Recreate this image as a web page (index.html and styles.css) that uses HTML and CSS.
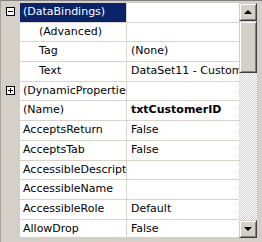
FILE: index.html
```html
<!DOCTYPE html>
<html>
<head>
<meta charset="utf-8">
<link rel="stylesheet" href="styles.css">
</head>
<body>
<div class="frame">
  <div class="grid">
    <div class="row selected">
      <div class="gutter"><span class="box minus"></span></div>
      <div class="name">(DataBindings)</div>
      <div class="value"></div>
    </div>
    <div class="row">
      <div class="gutter"></div>
      <div class="name sub">(Advanced)</div>
      <div class="value"></div>
    </div>
    <div class="row">
      <div class="gutter"></div>
      <div class="name sub">Tag</div>
      <div class="value">(None)</div>
    </div>
    <div class="row">
      <div class="gutter"></div>
      <div class="name sub">Text</div>
      <div class="value">DataSet11 - CustomerID</div>
    </div>
    <div class="row">
      <div class="gutter"><span class="box plus"></span></div>
      <div class="name">(DynamicProperties)</div>
      <div class="value"></div>
    </div>
    <div class="row">
      <div class="gutter"></div>
      <div class="name">(Name)</div>
      <div class="value bold">txtCustomerID</div>
    </div>
    <div class="row">
      <div class="gutter"></div>
      <div class="name">AcceptsReturn</div>
      <div class="value">False</div>
    </div>
    <div class="row">
      <div class="gutter"></div>
      <div class="name">AcceptsTab</div>
      <div class="value">False</div>
    </div>
    <div class="row">
      <div class="gutter"></div>
      <div class="name">AccessibleDescription</div>
      <div class="value"></div>
    </div>
    <div class="row">
      <div class="gutter"></div>
      <div class="name">AccessibleName</div>
      <div class="value"></div>
    </div>
    <div class="row">
      <div class="gutter"></div>
      <div class="name">AccessibleRole</div>
      <div class="value">Default</div>
    </div>
    <div class="row">
      <div class="gutter"></div>
      <div class="name">AllowDrop</div>
      <div class="value">False</div>
    </div>
  </div>
  <div class="scrollbar">
    <div class="btn"><span class="arrow up"></span></div>
    <div class="thumb"></div>
    <div class="track"></div>
    <div class="btn"><span class="arrow down"></span></div>
  </div>
</div>
</body>
</html>
```
FILE: styles.css
```css
html, body {
  margin: 0;
  padding: 0;
  background: #d4d0c8;
}
.frame {
  box-sizing: border-box;
  width: 262px;
  height: 242px;
  background: #d4d0c8;
  border-top: 1px solid #808080;
  border-left: 1px solid #a8a49c;
  padding: 2px 5px 5px 0;
  display: flex;
  font-family: "DejaVu Sans", sans-serif;
  font-size: 11px;
  color: #000;
}
.grid {
  width: 238px;
  height: 234px;
  overflow: hidden;
  display: flex;
  flex-direction: column;
}
.row {
  flex: 0 0 19.7px;
  height: 19.7px;
  display: flex;
}
.gutter {
  width: 19px;
  flex: 0 0 19px;
  background: #d4d0c8;
  position: relative;
}
.name, .value {
  box-sizing: border-box;
  background: #fff;
  border-bottom: 1px solid #d8d4cc;
  white-space: nowrap;
  overflow: hidden;
  line-height: 18.7px;
}
.name {
  width: 107px;
  flex: 0 0 107px;
  border-right: 1px solid #d8d4cc;
  padding-left: 3px;
}
.name.sub {
  padding-left: 19px;
}
.value {
  flex: 1 1 auto;
  padding-left: 4px;
}
.value.bold {
  font-weight: bold;
}
.selected .name {
  background: #0a246a;
  color: #fff;
}
.box {
  position: absolute;
  left: 5px;
  top: 4px;
  width: 9px;
  height: 9px;
  box-sizing: border-box;
  border: 1px solid #000;
  background: #fff;
}
.box::before {
  content: "";
  position: absolute;
  left: 1px;
  top: 3px;
  width: 5px;
  height: 1px;
  background: #000;
}
.plus::after {
  content: "";
  position: absolute;
  left: 3px;
  top: 1px;
  width: 1px;
  height: 5px;
  background: #000;
}
.scrollbar {
  width: 18px;
  height: 235px;
  display: flex;
  flex-direction: column;
}
.btn, .thumb {
  box-sizing: border-box;
  background: #d4d0c8;
  border-top: 1px solid #d4d0c8;
  border-left: 1px solid #d4d0c8;
  border-right: 1px solid #404040;
  border-bottom: 1px solid #404040;
  box-shadow: inset 1px 1px 0 #fff, inset -1px -1px 0 #808080;
}
.btn {
  height: 18px;
  flex: 0 0 18px;
  display: flex;
  align-items: center;
  justify-content: center;
}
.thumb {
  height: 52px;
  flex: 0 0 52px;
}
.track {
  flex: 1 1 auto;
  background: repeating-conic-gradient(#d4d0c8 0 25%, #ffffff 0 50%) 0 0 / 2px 2px;
}
.arrow {
  width: 0;
  height: 0;
  border-left: 4px solid transparent;
  border-right: 4px solid transparent;
}
.arrow.up {
  border-bottom: 4px solid #000;
}
.arrow.down {
  border-top: 4px solid #000;
}
```
